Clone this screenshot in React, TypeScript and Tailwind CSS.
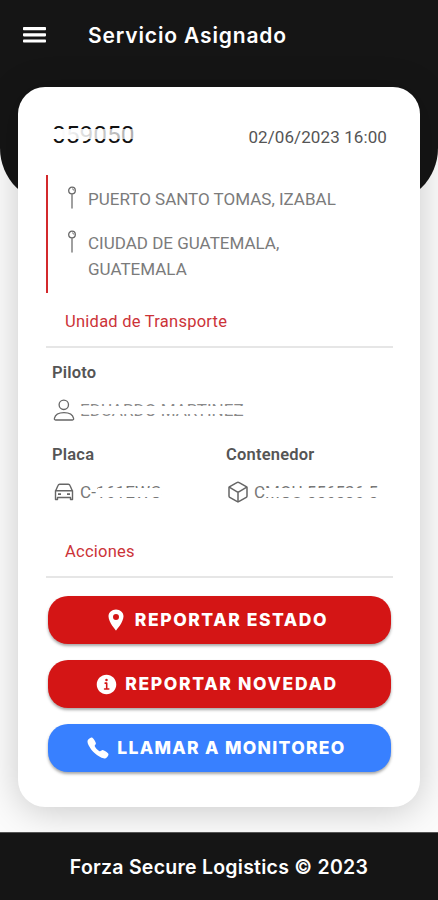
import React from "react";
import { IoCall, IoCubeOutline, IoInformationCircle, IoLocationSharp } from "react-icons/io5";

const stops = ["PUERTO SANTO TOMAS, IZABAL", "CIUDAD DE GUATEMALA, GUATEMALA"];

function MenuIcon() {
  return (
    <svg width="23" height="16" viewBox="0 0 23 16" fill="#fff">
      <rect y="0" width="23" height="3.2" rx="0.8" />
      <rect y="6.2" width="23" height="3.2" rx="0.8" />
      <rect y="12.4" width="23" height="3.2" rx="0.8" />
    </svg>
  );
}

function PinIcon() {
  return (
    <svg
      className="shrink-0"
      width="12"
      height="24"
      viewBox="0 0 12 24"
      fill="none"
      stroke="#666"
      strokeLinecap="round"
    >
      <circle cx="6" cy="4.5" r="3.3" strokeWidth="1.3" />
      <path d="M6.6 2.9a1.7 1.7 0 0 1 1.2 1.3" strokeWidth="1" />
      <path d="M6 8v14" strokeWidth="1.5" stroke="#808080" />
    </svg>
  );
}

function PersonIcon() {
  return (
    <svg width="24" height="24" viewBox="0 0 24 24" fill="none" stroke="#666" strokeWidth="1.3" strokeLinejoin="round">
      <circle cx="11.8" cy="6.8" r="4.7" />
      <path d="M3.5 22c-1 0-1.3-.8-1.1-1.6C3.2 16.7 7.200 14.600 12 14.600s8.800 2.100 9.600 5.800c.2.800-.1 1.600-1.100 1.600z" />
    </svg>
  );
}

function CarIcon() {
  return (
    <svg width="24" height="24" viewBox="0 0 24 24" fill="none" stroke="#666" strokeWidth="1.4" strokeLinejoin="round">
      <path d="M3.700 10.800 6 5.400C6.300 4.600 6.900 4.200 7.700 4.200h8.600c.8 0 1.400.4 1.700 1.200l2.300 5.400" />
      <path d="M3.500 10.800h17v8.700h-2v-2h-13v2h-2z" />
      <path d="M6 14.200h3M15 14.200h3" strokeWidth="1.800" />
    </svg>
  );
}

function SectionTitle({ children }: { children: React.ReactNode }) {
  return (
    <h2 className="ml-[-6px] mr-[-1px] h-[38px] border-b-2 border-[#e6e6e6] pl-[19px] text-[16.5px] leading-[24px] tracking-[0.25px] text-[#cc3338]">
      {children}
    </h2>
  );
}

// Text whose middle is covered by a white strip
function Hidden({ children, strip }: { children: React.ReactNode; strip: string }) {
  return (
    <span className="relative inline-block whitespace-nowrap">
      {children}
      <span className={`absolute ${strip}`} />
    </span>
  );
}

function ActionButton({
  color,
  icon,
  label,
  text,
}: {
  color: string;
  icon: React.ReactNode;
  label: string;
  text: string;
}) {
  return (
    <button
      className={`flex h-[48px] w-full items-center justify-center rounded-[20px] pr-[7px] text-white shadow-[0_2px_3px_rgba(0,0,0,0.35)] ${color}`}
    >
      {icon}
      <span className={`whitespace-nowrap font-['Inter',sans-serif] text-[17.5px] font-extrabold leading-[24px] ${text}`}>
        {label}
      </span>
    </button>
  );
}

export default function App() {
  return (
    <div className="flex h-[900px] w-[438px] flex-col overflow-hidden bg-[#fbfbfb] font-['Roboto',sans-serif]">
      <header className="h-[204px] shrink-0 rounded-b-[56px] bg-[#151515]">
        <div className="flex h-[70px] items-center pl-[23px]">
          <MenuIcon />
          <h1 className="ml-[42px] mt-[2px] whitespace-nowrap font-['Inter',sans-serif] text-[21px] font-semibold tracking-[0.85px] text-white">
            Servicio Asignado
          </h1>
        </div>
      </header>

      <main className="mx-[18px] -mt-[117px] h-[720px] shrink-0 rounded-[27px] bg-white pl-[34px] pr-[28px] shadow-[0_4px_36px_rgba(0,0,0,0.2)]">
        <div className="flex h-[88px] items-start justify-between pr-[5px] pt-[32px]">
          <span className="text-[24.5px] leading-[31px] text-[#111]">
            <Hidden strip="left-0 right-0 top-[10px] h-[10px] bg-linear-to-r from-white from-10% via-white/80 via-50% to-white/65">
              059050
            </Hidden>
          </span>
          <span className="mt-[5px] text-[17px] leading-[26px] tracking-[0.1px] text-[#555]">
            02/06/2023 16:00
          </span>
        </div>

        <div className="ml-[-6px] flex h-[118px] flex-col border-l-2 border-[#d3292c] pl-[18px] pt-[11px]">
          {stops.map((stop) => (
            <div key={stop} className="mb-[18px] flex">
              <PinIcon />
              <p className="ml-[10px] w-[260px] text-[17px] leading-[26px] text-[#7b7b7b]">{stop}</p>
            </div>
          ))}
        </div>

        <div className="mt-[17px]">
          <SectionTitle>Unidad de Transporte</SectionTitle>
        </div>

        <div className="pt-[13px] text-[#555]">
          <h3 className="text-[16.5px] font-semibold leading-[24px] tracking-[0.2px]">Piloto</h3>
          <div className="mt-[13px] flex h-[24px] items-center text-[17px] leading-[24px]">
            <PersonIcon />
            <span className="ml-[4px] tracking-[0.05px] text-[#8a8a8a]">
              <Hidden strip="left-0 right-0 top-[8px] h-[8px] bg-white">EDUARDO MARTINEZ</Hidden>
            </span>
          </div>
        </div>

        <div className="mt-[21px] grid grid-cols-2 text-[#555]">
          <div>
            <h3 className="text-[16.5px] font-semibold leading-[24px] tracking-[0.2px]">Placa</h3>
            <div className="mt-[13px] flex h-[24px] items-center text-[17px] leading-[24px]">
              <CarIcon />
              <span className="ml-[4px] tracking-[0.15px] text-[#777]">
                <Hidden strip="left-[18px] right-0 top-[8px] h-[9px] bg-white">C-161EWC</Hidden>
              </span>
            </div>
          </div>
          <div className="ml-[4px]">
            <h3 className="text-[16.5px] font-semibold leading-[24px] tracking-[0.2px]">Contenedor</h3>
            <div className="mt-[13px] flex h-[24px] items-center text-[17px] leading-[24px]">
              <IoCubeOutline className="h-[24px] w-[24px] text-[#666]" />
              <span className="ml-[4px] text-[#777]">
                <Hidden strip="left-[11px] right-0 top-[8px] h-[9px] bg-white">CMOU 556536 5</Hidden>
              </span>
            </div>
          </div>
        </div>

        <div className="mt-[36px]">
          <SectionTitle>Acciones</SectionTitle>
        </div>

        <div className="ml-[-4px] mr-px mt-[18px] flex flex-col gap-[16px]">
          <ActionButton
            color="bg-[#d41515]"
            icon={<IoLocationSharp className="mr-[7px] h-[24px] w-[24px]" />}
            label="REPORTAR ESTADO"
            text="tracking-[1.55px]"
          />
          <ActionButton
            color="bg-[#d41515]"
            icon={<IoInformationCircle className="mr-[6px] h-[25px] w-[25px]" />}
            label="REPORTAR NOVEDAD"
            text="tracking-[1.65px]"
          />
          <ActionButton
            color="bg-[#3880ff]"
            icon={<IoCall className="mr-[7px] h-[24px] w-[24px]" />}
            label="LLAMAR A MONITOREO"
            text="tracking-[1.3px]"
          />
        </div>
      </main>

      <footer className="mt-[25px] flex h-[68px] shrink-0 items-center justify-center border-t border-[#555] bg-[#151515] pt-[3px]">
        <p className="whitespace-nowrap font-['Inter',sans-serif] text-[19.5px] font-semibold tracking-[0.25px] text-white">
          Forza Secure Logistics © 2023
        </p>
      </footer>
    </div>
  );
}
